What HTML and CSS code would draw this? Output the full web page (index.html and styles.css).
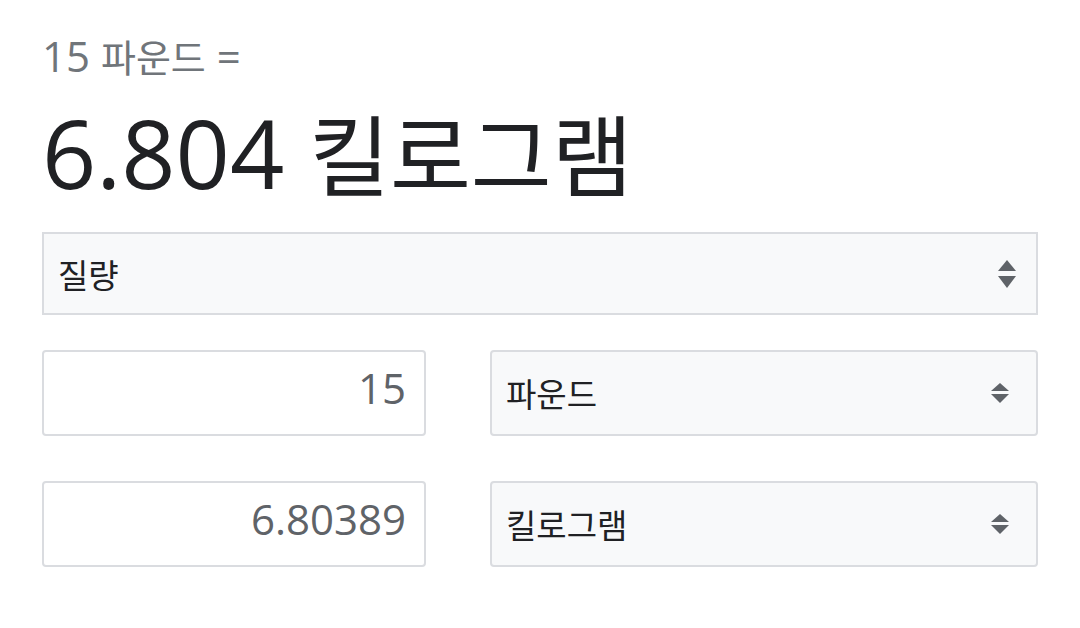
FILE: index.html
```html
<!DOCTYPE html>
<html lang="ko">
<head>
<meta charset="utf-8">
<link rel="stylesheet" href="styles.css">
</head>
<body>
<main class="conv">
  <div class="from">15 <span class="ko">파운드</span> =</div>
  <div class="result">6.804 <span class="ko">킬로그램</span></div>

  <div class="select select-main">
    <span class="select-text">질량</span>
    <svg class="arrows arrows-lg" viewBox="0 0 18 28" width="18" height="28"><path d="M9 0 L18 11 L0 11 Z"/><path d="M0 16 L18 16 L9 28 Z"/></svg>
  </div>

  <div class="row row-first">
    <div class="field">15</div>
    <div class="select select-unit">
      <span class="select-text">파운드</span>
      <svg class="arrows" viewBox="0 0 18 20" width="18" height="20"><path d="M9 0 L18 8 L0 8 Z"/><path d="M0 11 L18 11 L9 20 Z"/></svg>
    </div>
  </div>

  <div class="row">
    <div class="field">6.80389</div>
    <div class="select select-unit">
      <span class="select-text">킬로그램</span>
      <svg class="arrows" viewBox="0 0 18 20" width="18" height="20"><path d="M9 0 L18 8 L0 8 Z"/><path d="M0 11 L18 11 L9 20 Z"/></svg>
    </div>
  </div>
</main>
</body>
</html>
```

FILE: styles.css
```css
html, body {
  margin: 0;
  padding: 0;
  background: #ffffff;
}

body {
  font-family: "Open Sans", "Noto Sans CJK KR", sans-serif;
  color: #202124;
}

.conv {
  padding: 32px 42px 0;
}

.ko {
  font-family: "Noto Sans CJK KR", "Open Sans", sans-serif;
}

.from {
  font-size: 42px;
  line-height: 48px;
  height: 48px;
  color: #70757a;
}

.from .ko {
  font-size: 38px;
}

.result {
  margin-top: 16px;
  font-size: 95px;
  line-height: 110px;
  height: 110px;
  color: #202124;
}

.result .ko {
  font-size: 88px;
}

.select {
  box-sizing: border-box;
  display: flex;
  align-items: center;
  justify-content: space-between;
  background: #f8f9fa;
  border: 2px solid #dadce0;
  color: #202124;
}

.select-text {
  font-family: "Noto Sans CJK KR", "Open Sans", sans-serif;
  font-size: 33px;
  line-height: 40px;
}

.arrows {
  fill: #5f6368;
  flex: none;
}

.select-main {
  margin-top: 26px;
  height: 83px;
  padding: 0 20px 0 14px;
}

.row {
  display: flex;
  gap: 64px;
  margin-top: 45px;
}

.row-first {
  margin-top: 35px;
}

.field {
  box-sizing: border-box;
  width: 384px;
  height: 86px;
  border: 2px solid #dadce0;
  border-radius: 4px;
  display: flex;
  align-items: center;
  justify-content: flex-end;
  padding: 0 18px 11px 0;
  font-size: 42px;
  color: #5f6368;
}

.select-unit {
  flex: 1;
  height: 86px;
  border-radius: 4px;
  padding: 0 27px 0 14px;
}
```
